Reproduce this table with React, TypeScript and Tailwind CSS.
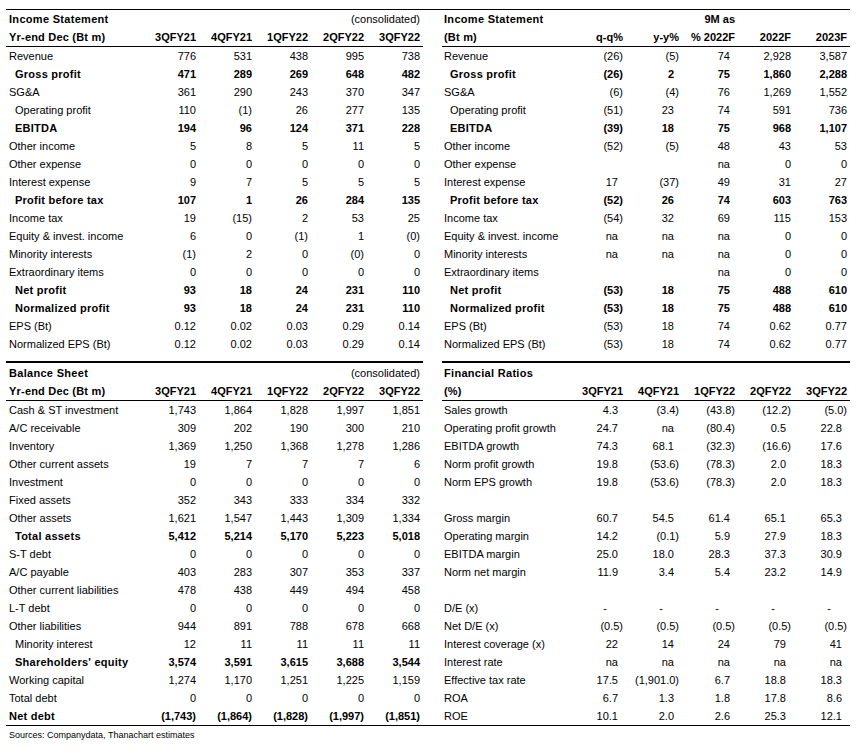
import React from 'react';

type Row = { label: string; values: string[]; bold?: boolean; indent?: boolean };

const incomeQuarterly: Row[] = [
  { label: 'Revenue', values: ['776', '531', '438', '995', '738'] },
  { label: 'Gross profit', values: ['471', '289', '269', '648', '482'], bold: true, indent: true },
  { label: 'SG&A', values: ['361', '290', '243', '370', '347'] },
  { label: 'Operating profit', values: ['110', '(1)', '26', '277', '135'], indent: true },
  { label: 'EBITDA', values: ['194', '96', '124', '371', '228'], bold: true, indent: true },
  { label: 'Other income', values: ['5', '8', '5', '11', '5'] },
  { label: 'Other expense', values: ['0', '0', '0', '0', '0'] },
  { label: 'Interest expense', values: ['9', '7', '5', '5', '5'] },
  { label: 'Profit before tax', values: ['107', '1', '26', '284', '135'], bold: true, indent: true },
  { label: 'Income tax', values: ['19', '(15)', '2', '53', '25'] },
  { label: 'Equity & invest. income', values: ['6', '0', '(1)', '1', '(0)'] },
  { label: 'Minority interests', values: ['(1)', '2', '0', '(0)', '0'] },
  { label: 'Extraordinary items', values: ['0', '0', '0', '0', '0'] },
  { label: 'Net profit', values: ['93', '18', '24', '231', '110'], bold: true, indent: true },
  { label: 'Normalized profit', values: ['93', '18', '24', '231', '110'], bold: true, indent: true },
  { label: 'EPS (Bt)', values: ['0.12', '0.02', '0.03', '0.29', '0.14'] },
  { label: 'Normalized EPS (Bt)', values: ['0.12', '0.02', '0.03', '0.29', '0.14'] },
];

const incomeAnnual: Row[] = [
  { label: 'Revenue', values: ['(26)', '(5)', '74', '2,928', '3,587'] },
  { label: 'Gross profit', values: ['(26)', '2', '75', '1,860', '2,288'], bold: true, indent: true },
  { label: 'SG&A', values: ['(6)', '(4)', '76', '1,269', '1,552'] },
  { label: 'Operating profit', values: ['(51)', '23', '74', '591', '736'], indent: true },
  { label: 'EBITDA', values: ['(39)', '18', '75', '968', '1,107'], bold: true, indent: true },
  { label: 'Other income', values: ['(52)', '(5)', '48', '43', '53'] },
  { label: 'Other expense', values: ['', '', 'na', '0', '0'] },
  { label: 'Interest expense', values: ['17', '(37)', '49', '31', '27'] },
  { label: 'Profit before tax', values: ['(52)', '26', '74', '603', '763'], bold: true, indent: true },
  { label: 'Income tax', values: ['(54)', '32', '69', '115', '153'] },
  { label: 'Equity & invest. income', values: ['na', 'na', 'na', '0', '0'] },
  { label: 'Minority interests', values: ['na', 'na', 'na', '0', '0'] },
  { label: 'Extraordinary items', values: ['', '', 'na', '0', '0'] },
  { label: 'Net profit', values: ['(53)', '18', '75', '488', '610'], bold: true, indent: true },
  { label: 'Normalized profit', values: ['(53)', '18', '75', '488', '610'], bold: true, indent: true },
  { label: 'EPS (Bt)', values: ['(53)', '18', '74', '0.62', '0.77'] },
  { label: 'Normalized EPS (Bt)', values: ['(53)', '18', '74', '0.62', '0.77'] },
];

const balanceSheet: Row[] = [
  { label: 'Cash & ST investment', values: ['1,743', '1,864', '1,828', '1,997', '1,851'] },
  { label: 'A/C receivable', values: ['309', '202', '190', '300', '210'] },
  { label: 'Inventory', values: ['1,369', '1,250', '1,368', '1,278', '1,286'] },
  { label: 'Other current assets', values: ['19', '7', '7', '7', '6'] },
  { label: 'Investment', values: ['0', '0', '0', '0', '0'] },
  { label: 'Fixed assets', values: ['352', '343', '333', '334', '332'] },
  { label: 'Other assets', values: ['1,621', '1,547', '1,443', '1,309', '1,334'] },
  { label: 'Total assets', values: ['5,412', '5,214', '5,170', '5,223', '5,018'], bold: true, indent: true },
  { label: 'S-T debt', values: ['0', '0', '0', '0', '0'] },
  { label: 'A/C payable', values: ['403', '283', '307', '353', '337'] },
  { label: 'Other current liabilities', values: ['478', '438', '449', '494', '458'] },
  { label: 'L-T debt', values: ['0', '0', '0', '0', '0'] },
  { label: 'Other liabilities', values: ['944', '891', '788', '678', '668'] },
  { label: 'Minority interest', values: ['12', '11', '11', '11', '11'], indent: true },
  { label: "Shareholders' equity", values: ['3,574', '3,591', '3,615', '3,688', '3,544'], bold: true, indent: true },
  { label: 'Working capital', values: ['1,274', '1,170', '1,251', '1,225', '1,159'] },
  { label: 'Total debt', values: ['0', '0', '0', '0', '0'] },
  { label: 'Net debt', values: ['(1,743)', '(1,864)', '(1,828)', '(1,997)', '(1,851)'], bold: true },
];

const ratios: Row[] = [
  { label: 'Sales growth', values: ['4.3', '(3.4)', '(43.8)', '(12.2)', '(5.0)'] },
  { label: 'Operating profit growth', values: ['24.7', 'na', '(80.4)', '0.5', '22.8'] },
  { label: 'EBITDA growth', values: ['74.3', '68.1', '(32.3)', '(16.6)', '17.6'] },
  { label: 'Norm profit growth', values: ['19.8', '(53.6)', '(78.3)', '2.0', '18.3'] },
  { label: 'Norm EPS growth', values: ['19.8', '(53.6)', '(78.3)', '2.0', '18.3'] },
  { label: '', values: ['', '', '', '', ''] },
  { label: 'Gross margin', values: ['60.7', '54.5', '61.4', '65.1', '65.3'] },
  { label: 'Operating margin', values: ['14.2', '(0.1)', '5.9', '27.9', '18.3'] },
  { label: 'EBITDA margin', values: ['25.0', '18.0', '28.3', '37.3', '30.9'] },
  { label: 'Norm net margin', values: ['11.9', '3.4', '5.4', '23.2', '14.9'] },
  { label: '', values: ['', '', '', '', ''] },
  { label: 'D/E (x)', values: ['-', '-', '-', '-', '-'] },
  { label: 'Net D/E (x)', values: ['(0.5)', '(0.5)', '(0.5)', '(0.5)', '(0.5)'] },
  { label: 'Interest coverage (x)', values: ['22', '14', '24', '79', '41'] },
  { label: 'Interest rate', values: ['na', 'na', 'na', 'na', 'na'] },
  { label: 'Effective tax rate', values: ['17.5', '(1,901.0)', '6.7', '18.8', '18.3'] },
  { label: 'ROA', values: ['6.7', '1.3', '1.8', '17.8', '8.6'] },
  { label: 'ROE', values: ['10.1', '2.0', '2.6', '25.3', '12.1'] },
];

const quarters = ['3QFY21', '4QFY21', '1QFY22', '2QFY22', '3QFY22'];

// Excel-style "_)" alignment: positives leave room for a closing paren
function padClass(v: string, padded: boolean) {
  if (!padded) return 'pr-[3px]';
  if (v === '-') return 'pr-[19px]';
  if (v.startsWith('(')) return 'pr-[3px]';
  return 'pr-[8px]';
}

function Table({
  title,
  note,
  sub,
  heads,
  topHeads,
  rows,
  labelW,
  padCols,
  labelPad,
  thick,
}: {
  title: string;
  note?: string;
  sub: string;
  heads: string[];
  topHeads?: string[];
  rows: Row[];
  labelW: string;
  padCols: number[];
  labelPad: string;
  thick?: boolean;
}) {
  return (
    <div className={thick ? 'border-t-2 border-black' : ''}>
      <div className="border-b border-black">
        <div className={`flex items-center font-bold ${thick ? 'h-[20px]' : 'h-[19px]'}`}>
          <div className={`${labelW} ${labelPad} shrink-0 tracking-[0.3px]`}>{title}</div>
          {topHeads ? (
            topHeads.map((h, i) => (
              <div key={i} className="w-[56px] text-right pr-[3px]">
                {h}
              </div>
            ))
          ) : (
            <div className="flex-1 text-right pr-[3px] font-normal">{note}</div>
          )}
        </div>
        <div className="flex items-center h-[17px] font-bold">
          <div className={`${labelW} ${labelPad} shrink-0 tracking-[0.2px]`}>{sub}</div>
          {heads.map((h) => (
            <div key={h} className="w-[56px] text-right pr-[3px]">
              {h}
            </div>
          ))}
        </div>
      </div>
      {rows.map((r, ri) => (
        <div key={ri} className={`flex items-center h-[18px] ${r.bold ? 'font-bold' : ''}`}>
          <div className={`${labelW} ${labelPad} shrink-0 whitespace-nowrap`}>
            <span className={`${r.indent ? 'pl-[6px]' : ''} ${r.bold ? 'tracking-[0.25px]' : ''}`}>{r.label}</span>
          </div>
          {r.values.map((v, i) => (
            <div key={i} className={`w-[56px] text-right whitespace-nowrap ${padClass(v, padCols.includes(i))}`}>
              {v}
            </div>
          ))}
        </div>
      ))}
    </div>
  );
}

export default function App() {
  return (
    <div className="w-[859px] h-[754px] bg-white text-black text-[11px] leading-none font-['Liberation_Sans',Arial,sans-serif]">
      <div className="pt-[9px] pl-[6px]">
        <div className="flex w-[844px] border-t border-black">
          <div className="w-[417px]">
            <Table
              title="Income Statement"
              note="(consolidated)"
              sub="Yr-end Dec (Bt m)"
              heads={quarters}
              rows={incomeQuarterly}
              labelW="w-[137px]"
              labelPad="pl-[3px]"
              padCols={[]}
            />
          </div>
          <div className="w-[19px]" />
          <div className="w-[408px]">
            <Table
              title="Income Statement"
              topHeads={['', '', '9M as', '', '']}
              sub="(Bt m)"
              heads={['q-q%', 'y-y%', '% 2022F', '2022F', '2023F']}
              rows={incomeAnnual}
              labelW="w-[128px]"
              labelPad="pl-[2px]"
              padCols={[0, 1, 2]}
            />
          </div>
        </div>

        <div className="flex w-[844px] mt-[8px] border-b border-black">
          <div className="w-[417px]">
            <Table
              title="Balance Sheet"
              note="(consolidated)"
              sub="Yr-end Dec (Bt m)"
              heads={quarters}
              rows={balanceSheet}
              labelW="w-[137px]"
              labelPad="pl-[3px]"
              padCols={[]}
              thick
            />
          </div>
          <div className="w-[19px]" />
          <div className="w-[408px]">
            <Table
              title="Financial Ratios"
              note=""
              sub="(%)"
              heads={quarters}
              rows={ratios}
              labelW="w-[128px]"
              labelPad="pl-[2px]"
              padCols={[0, 1, 2, 3, 4]}
              thick
            />
          </div>
        </div>

        <p className="mt-[4px] pl-[3px] text-[9px] leading-[11px]">Sources: Companydata, Thanachart estimates</p>
      </div>
    </div>
  );
}
